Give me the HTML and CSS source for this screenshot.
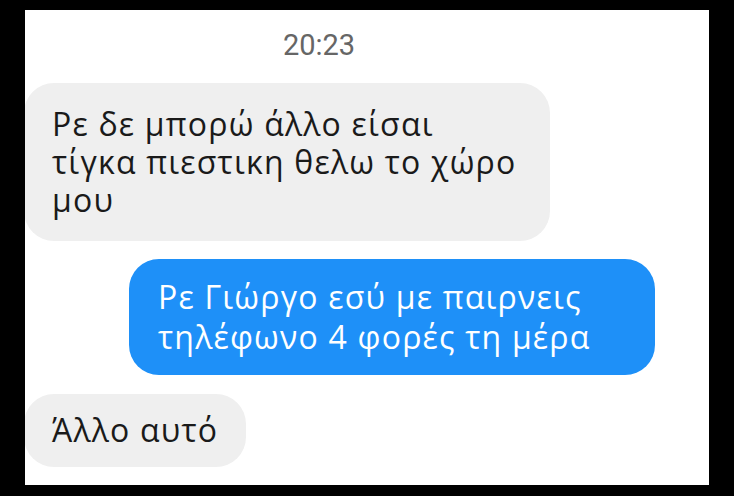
FILE: index.html
```html
<html>
<head>
    <link rel="stylesheet" href="styles.css">
</head>
<body>
    <div class="screen">
        <div class="time">20:23</div>
        <div class="thread">
            <div class="msg msg-in wide">Ρε δε μπορώ άλλο είσαι<br>τίγκα πιεστικη θελω το χώρο<br>μου</div>
            <div class="msg msg-out wide">Ρε Γιώργο εσύ με παιρνεις<br>τηλέφωνο 4 φορές τη μέρα</div>
            <div class="msg msg-in short">Άλλο αυτό</div>
        </div>
    </div>
</body>
</html>
```

FILE: styles.css
```css
body {
    margin: 0;
    padding: 10px 25px 11px 25px;
    background-color: #000;
    font-family: "Open Sans", "Noto Sans", sans-serif;
    height: 496px;
    box-sizing: border-box;
}
.screen {
    background-color: #fff;
    height: 475px;
    overflow: hidden;
}
.time {
    padding: 18px 96px 0 0;
    text-align: center;
    font-family: Roboto, sans-serif;
    font-size: 29px;
    line-height: 34px;
    color: #666;
}
.thread {
    display: flex;
    flex-direction: column;
    gap: 18px;
    margin-top: 21px;
}
.msg {
    font-size: 32px;
    line-height: 38px;
    letter-spacing: 1.2px;
    box-sizing: border-box;
}
.wide {
    width: 526px;
}
.msg-in {
    align-self: flex-start;
    margin-left: -1px;
    background-color: #efefef;
    color: #1a1a1a;
    padding: 22px 28px;
    border-radius: 30px;
}
.msg-out {
    align-self: flex-end;
    margin-right: 54px;
    background-color: #1e90f8;
    color: #fff;
    padding: 18px 29px;
    line-height: 40px;
    border-radius: 30px;
}
.short {
    padding: 17px 28px 18px 28px;
    margin-top: 1px;
}
```
